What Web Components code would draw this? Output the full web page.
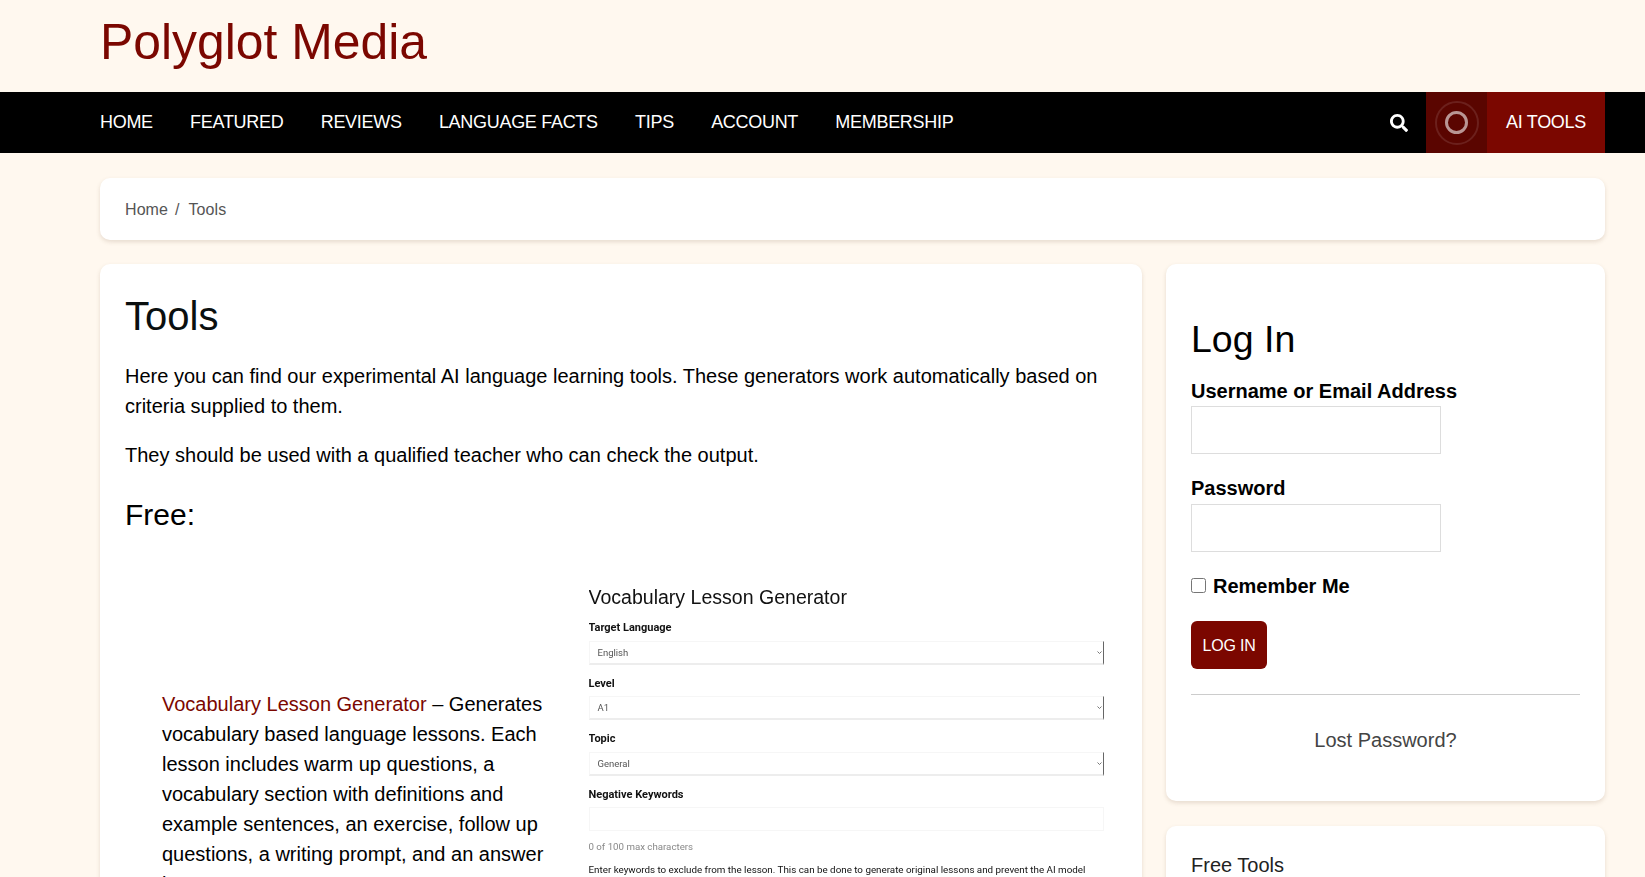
<!DOCTYPE html>
<html lang="en"><head><meta charset="utf-8"><title>Tools - Polyglot Media</title>
<style>
html,body{margin:0;padding:0;height:877px;overflow:hidden;background:#fff8ef;font-family:"Liberation Sans",Arial,sans-serif;color:#000}
</style></head><body>
<site-header>Polyglot Media</site-header>
<site-nav></site-nav>
<page-body>
  <bread-crumb></bread-crumb>
  <main-row>
    <card-box slot="main" kind="main">
      <tools-article></tools-article>
    </card-box>
    <side-col slot="side">
      <card-box kind="login"><login-form></login-form></card-box>
      <card-box kind="free"><free-tools></free-tools></card-box>
    </side-col>
  </main-row>
</page-body>
<script>
function def(name, html){
  customElements.define(name, class extends HTMLElement{
    constructor(){super();this.attachShadow({mode:"open"}).innerHTML=html;}
  });
}
const chev='<svg viewBox="0 0 5 5"><path d="M.5 1.5 2.5 3.5 4.5 1.5"/></svg>';
def("site-header",`<style>
:host{display:block;height:92px;padding:17px 100px 0;box-sizing:border-box}
h1{margin:0;font:400 49.85px/50px "Liberation Sans",Arial,sans-serif;color:#7b0700}
</style><h1><slot></slot></h1>`);
def("site-nav",`<style>
:host{display:flex;align-items:stretch;height:61px;background:#000;padding:0 40px 0 100px;color:#fff;font:400 18px/61px "Liberation Sans",Arial,sans-serif;letter-spacing:-.3px}
nav{display:flex;gap:37.3px;flex:1}
a{color:#fff;text-decoration:none}
.search{display:flex;align-items:center;margin-right:18px}
.search svg{width:18px;height:18px;display:block;fill:#fff}
.spin{width:61px;background:#5a0500;display:flex;align-items:center;justify-content:center}
.outer{width:44px;height:44px;border-radius:50%;border:2px solid rgba(255,255,255,.11);box-sizing:border-box;display:flex;align-items:center;justify-content:center}
.inner{width:23px;height:23px;border-radius:50%;border:3px solid rgba(255,255,255,.58);box-sizing:border-box}
.ai{width:118px;background:#7b0700;text-align:center}
</style><nav><a>HOME</a><a>FEATURED</a><a>REVIEWS</a><a>LANGUAGE FACTS</a><a>TIPS</a><a>ACCOUNT</a><a>MEMBERSHIP</a></nav>
<div class="search"><svg viewBox="0 0 512 512"><path d="M505 442.7L405.3 343c-4.5-4.5-10.6-7-17-7H372c27.6-35.3 44-79.7 44-128C416 93.1 322.9 0 208 0S0 93.1 0 208s93.1 208 208 208c48.3 0 92.7-16.4 128-44v16.3c0 6.4 2.5 12.5 7 17l99.7 99.7c9.4 9.4 24.6 9.4 33.9 0l28.3-28.3c9.4-9.4 9.4-24.6.1-34zM208 336c-70.7 0-128-57.2-128-128 0-70.7 57.2-128 128-128 70.7 0 128 57.2 128 128 0 70.7-57.2 128-128 128z"/></svg></div>
<div class="spin"><div class="outer"><div class="inner"></div></div></div><a class="ai">AI TOOLS</a>`);
def("page-body",`<style>:host{display:block;padding:25px 40px 0 100px}</style><slot></slot>`);
def("bread-crumb",`<style>
:host{display:flex;align-items:center;height:62px;background:#fff;border-radius:10px;box-shadow:0 2px 4px rgba(120,90,60,.18);padding:2px 25px 0;box-sizing:border-box;margin-bottom:24px;color:#555;font:400 16px "Liberation Sans",Arial,sans-serif;letter-spacing:.08px}
i{font-style:normal;margin:0 9px 0 7px}
</style><span>Home</span><i>/</i><span>Tools</span>`);
def("main-row",`<style>:host{display:grid;grid-template-columns:1042px 439px;gap:24px;align-items:start}</style><slot name="main"></slot><slot name="side"></slot>`);
def("side-col",`<style>:host{display:flex;flex-direction:column;gap:25px}</style><slot></slot>`);
def("card-box",`<style>
:host{display:block;background:#fff;border-radius:10px;box-shadow:0 2px 4px rgba(120,90,60,.18);padding:0 25px;box-sizing:border-box}
:host([kind=login]){height:537px}
:host([kind=free]){height:100px}
</style><slot></slot>`);
def("tools-article",`<style>
:host{display:block;font:400 20px/30px "Liberation Sans",Arial,sans-serif;color:#000}
h1{font:400 40px/48px "Liberation Sans",Arial,sans-serif;margin:0;padding-top:28px;color:#0a0f0f}
p{margin:0}
.p1{margin-top:20.5px}.p2{margin-top:19px}
h2{font:400 30px/36px "Liberation Sans",Arial,sans-serif;margin:27px 0 0}
.mt{display:grid;grid-template-columns:463.5px 515px;margin-top:52px;align-items:center}
.txt{padding:0 34px 0 37px}
.txt a{color:#7b0700;text-decoration:none}
</style>
<h1>Tools</h1>
<p class="p1">Here you can find our experimental AI language learning tools. These generators work automatically based on criteria supplied to them.</p>
<p class="p2">They should be used with a qualified teacher who can check the output.</p>
<h2>Free:</h2>
<div class="mt"><div class="txt"><a>Vocabulary Lesson Generator</a> – Generates vocabulary based language lessons. Each lesson includes warm up questions, a vocabulary section with definitions and example sentences, an exercise, follow up questions, a writing prompt, and an answer key.</div><lesson-shot></lesson-shot></div>`);
def("lesson-shot",`<style>
:host{display:block;font-family:"Liberation Sans",Arial,sans-serif;color:#111;width:515px;height:418px;overflow:hidden;filter:blur(.3px)}
h3{font:400 19.55px/24px "Liberation Sans",Arial,sans-serif;margin:0 0 12.5px}
label{display:block;font:700 11px/14px Roboto,"Liberation Sans",sans-serif;margin:0 0 5.5px}
.sel{display:flex;align-items:center;justify-content:space-between;height:24px;box-sizing:border-box;border:1px solid #f6f6f6;border-bottom:2px solid #ededed;border-right:1px solid #666;padding:0 1px 0 8px;font:400 9.5px Roboto,"Liberation Sans",sans-serif;color:#555;margin-bottom:12px}
.sel svg{width:5px;height:5px;fill:none;stroke:#777;stroke-width:1}
.inp{height:24px;box-sizing:border-box;border:1px solid #f6f6f6;margin-bottom:8.6px}
small{display:block;font:400 9.7px/14px Roboto,"Liberation Sans",sans-serif;color:#888;margin-bottom:9.4px}
p{font:400 9.8px/14px Roboto,"Liberation Sans",sans-serif;margin:0;white-space:nowrap}
</style><h3>Vocabulary Lesson Generator</h3>
<label>Target Language</label><div class="sel"><span>English</span>${chev}</div>
<label>Level</label><div class="sel"><span>A1</span>${chev}</div>
<label>Topic</label><div class="sel"><span>General</span>${chev}</div>
<label>Negative Keywords</label><div class="inp"></div>
<small>0 of 100 max characters</small>
<p>Enter keywords to exclude from the lesson. This can be done to generate original lessons and prevent the AI model</p>`);
def("login-form",`<style>
:host{display:block;font:700 20px/24px "Liberation Sans",Arial,sans-serif;color:#000}
h2{font:400 37.5px/44px "Liberation Sans",Arial,sans-serif;margin:0;padding-top:53px}
label{display:block}
.u{margin:17.5px 0 3.5px}.p{margin:22.5px 0 4px}
.box{width:250px;height:47.5px;box-sizing:border-box;border:1px solid #ddd;display:block}
.rem{display:flex;align-items:center;gap:7px;margin-top:22px}
.ck{width:15px;height:15px;box-sizing:border-box;border:1px solid #767676;border-radius:2.5px;background:#fff}
button{display:block;margin-top:23.5px;width:76px;height:48px;border:0;border-radius:6px;background:#7b0700;color:#fff;font:400 16px "Liberation Sans",Arial,sans-serif;letter-spacing:-.2px;padding:2px 0 0}
hr{border:0;border-top:1px solid #ccc;margin:25px 0 0}
.lost{display:block;text-align:center;margin-top:30px;font:400 20px/30px "Liberation Sans",Arial,sans-serif;color:#444}
</style><h2>Log In</h2>
<label class="u">Username or Email Address</label><div class="box"></div>
<label class="p">Password</label><div class="box"></div>
<div class="rem"><span class="ck"></span><span>Remember Me</span></div>
<button>LOG IN</button><hr><a class="lost">Lost Password?</a>`);
def("free-tools",`<style>:host{display:block;font:400 20px/24px "Liberation Sans",Arial,sans-serif;color:#222;padding-top:27px}</style>Free Tools`);
</script>
</body></html>
